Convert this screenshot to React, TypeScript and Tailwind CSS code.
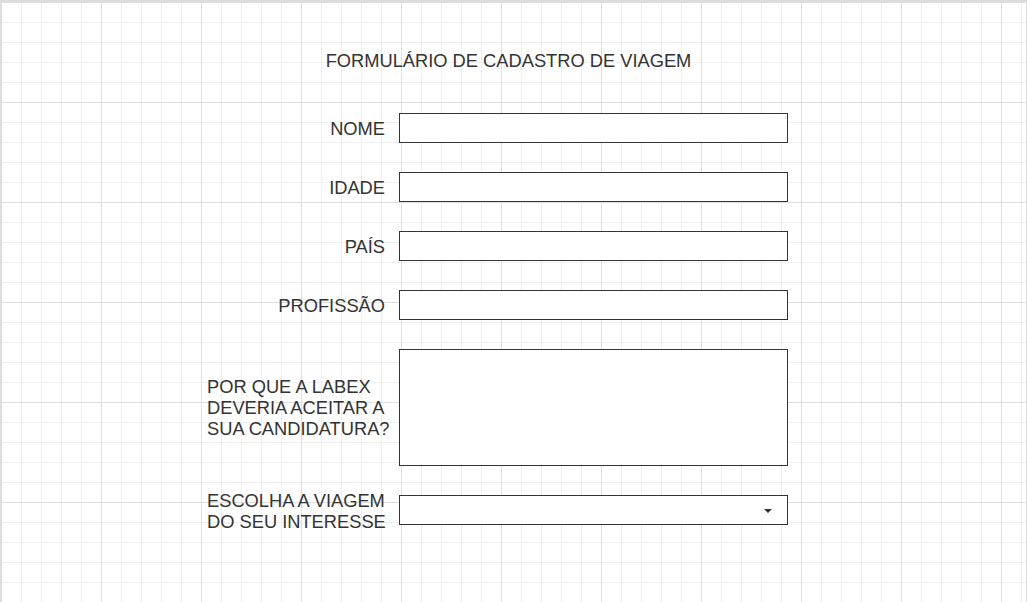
import React from 'react';

const fields = ['NOME', 'IDADE', 'PAÍS', 'PROFISSÃO'];

const gridBg =
  'bg-[linear-gradient(to_right,#dfdfdf_1px,transparent_1px),linear-gradient(to_bottom,#dfdfdf_1px,transparent_1px),linear-gradient(to_right,#efefef_1px,transparent_1px),linear-gradient(to_bottom,#efefef_1px,transparent_1px)] bg-[size:100px_100px,100px_100px,20px_20px,20px_20px]';

const App: React.FC = () => {
  return (
    <div className="h-[602px] w-[1027px] overflow-hidden bg-white font-['Liberation_Sans',Arial,sans-serif] text-[18.3px] text-[#333]">
      <div
        className={`h-[602px] w-[1027px] border-l border-r border-t-2 border-[#dcdcdc] ${gridBg}`}
      >
        <div className="ml-[205px] flex w-[605px] flex-col pt-[48px]">
          <h1 className="text-center leading-[21px]">
            FORMULÁRIO DE CADASTRO DE VIAGEM
          </h1>

          <div className="mt-[42px] flex flex-col">
            {fields.map((label) => (
              <div key={label} className="mb-[29px] flex items-center">
                <label className="w-[193px] pr-[14px] text-right leading-[21px]">
                  {label}
                </label>
                <input className="h-[30px] w-[389px] border border-[#333] bg-white outline-none" />
              </div>
            ))}

            <div className="mb-[23px] flex items-center">
              <label className="w-[193px] pl-[1px] text-left leading-[21px]">
                POR QUE A LABEX DEVERIA ACEITAR A SUA CANDIDATURA?
              </label>
              <textarea className="h-[117px] w-[389px] resize-none border border-[#333] bg-white outline-none" />
            </div>

            <div className="flex items-center">
              <label className="w-[193px] pl-[1px] pr-[4px] pt-[1px] text-left leading-[21px]">
                ESCOLHA A VIAGEM DO SEU INTERESSE
              </label>
              <div className="-mt-[1px] flex h-[30px] w-[389px] items-center justify-end border border-[#333] bg-white pr-[14px]">
                <svg width="10" height="6" viewBox="0 0 10 6" className="mt-[2px]">
                  <path d="M1 1h8L5 5z" fill="#333" />
                </svg>
              </div>
            </div>
          </div>
        </div>
      </div>
    </div>
  );
};

export default App;
